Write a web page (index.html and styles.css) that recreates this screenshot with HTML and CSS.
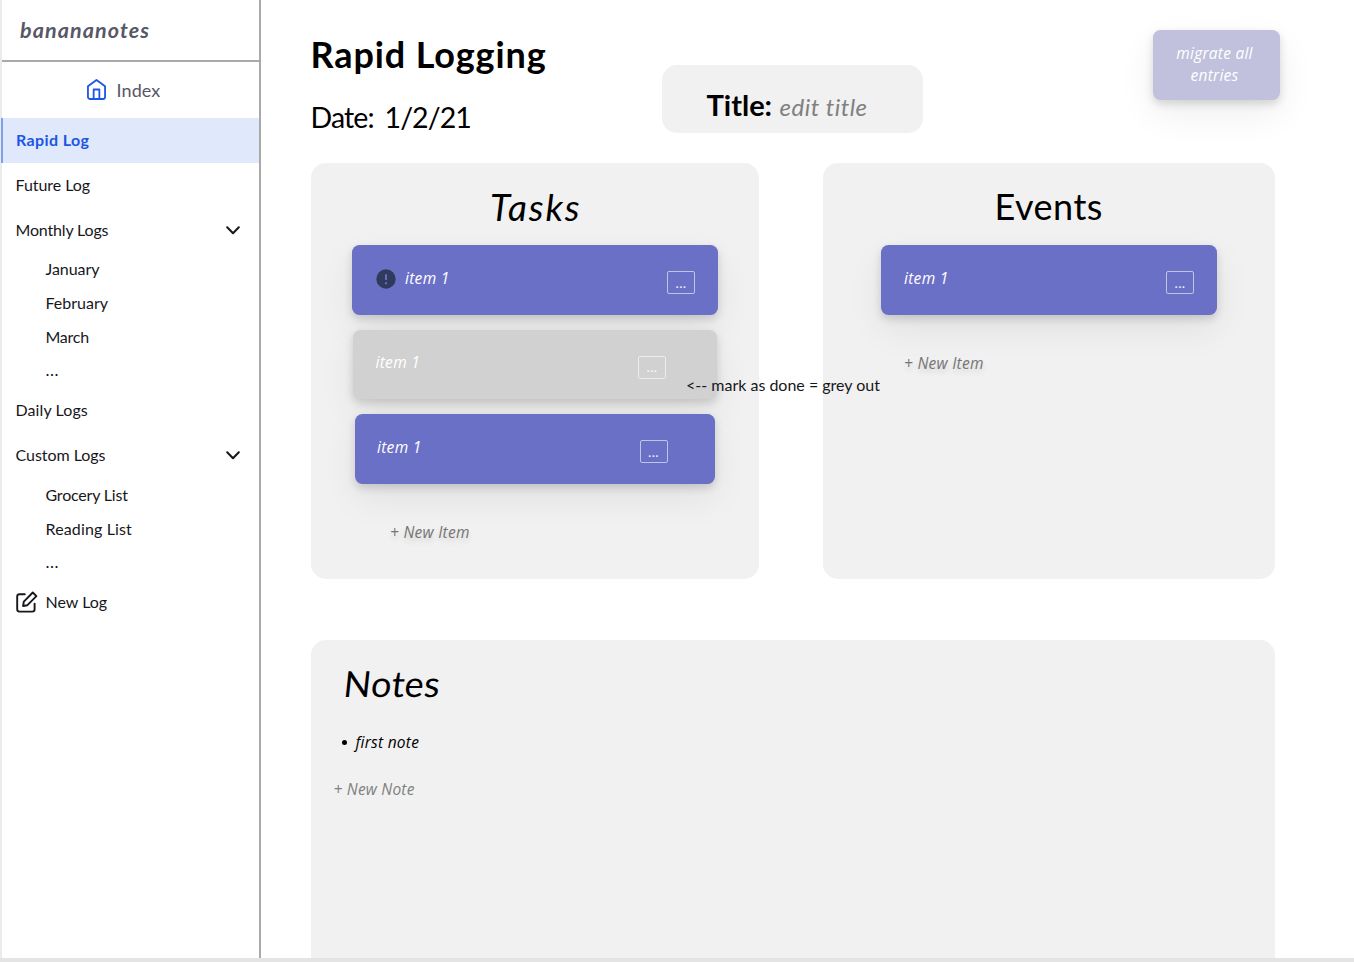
FILE: index.html
```
<!DOCTYPE html>
<html lang="en">
<head>
<meta charset="utf-8">
<title>banananotes</title>
<link rel="stylesheet" href="styles.css">
</head>
<body>
<div class="app">
  <aside class="sidebar">
    <div class="brand"><span>banananotes</span></div>
    <a class="index-link">
      <svg class="home" viewBox="0 0 20 22" fill="none" stroke="#1d55e5" stroke-width="1.9" stroke-linejoin="round"><path d="M1 7.6 10 1l9 6.6V19a2 2 0 0 1-2 2H3a2 2 0 0 1-2-2Z"/><path d="M7 21V11h6v10"/></svg>
      <span>Index</span>
    </a>
    <nav class="nav">
      <a class="row active"><span class="t-rapid">Rapid Log</span></a>
      <a class="row"><span class="t-future">Future Log</span></a>
      <a class="row"><span class="t-monthly">Monthly Logs</span>
        <svg class="chevron" viewBox="0 0 14 9"><path d="m1.2 1.2 5.8 6 5.8-6"/></svg></a>
      <a class="sub t-january">January</a>
      <a class="sub">February</a>
      <a class="sub t-march">March</a>
      <a class="sub dots">...</a>
      <a class="row"><span class="t-daily">Daily Logs</span></a>
      <a class="row"><span class="t-custom">Custom Logs</span>
        <svg class="chevron" viewBox="0 0 14 9"><path d="m1.2 1.2 5.8 6 5.8-6"/></svg></a>
      <div class="group">
        <a class="sub t-grocery">Grocery List</a>
        <a class="sub t-reading">Reading List</a>
        <a class="sub dots">...</a>
      </div>
      <a class="row new-log">
        <svg class="edit" viewBox="0 0 22 22" fill="none" stroke="#17171c" stroke-width="1.9" stroke-linecap="round" stroke-linejoin="round"><path d="M8.8 3.2H3.5a2.3 2.3 0 0 0-2.3 2.3v12.8a2.3 2.3 0 0 0 2.3 2.3h12.8a2.3 2.3 0 0 0 2.3-2.3V12.6"/><path d="m16.8 1.5 3.6 3.6-9 9.1-4.3.8.7-4.4z"/></svg>
        <span>New Log</span></a>
    </nav>
  </aside>

  <main class="main">
    <header class="head">
      <div class="heading">
        <h1>Rapid Logging</h1>
        <p class="date">Date: 1/2/21</p>
      </div>
      <div class="title-box"><b>Title:</b><i>edit title</i></div>
      <button class="migrate">migrate all<br>entries</button>
    </header>

    <div class="panels">
      <section class="panel tasks">
        <h2 class="slant t-tasks">Tasks</h2>
        <div class="card card-a">
          <svg class="alert" viewBox="0 0 20 20"><circle cx="10" cy="10" r="9.7" fill="#303a5c"/><path d="M10 5.3v5.6M10 13.3v1.9" stroke="#6b70c7" stroke-width="1.9"/></svg>
          <span class="item">item 1</span><button class="menu">...</button>
        </div>
        <div class="card card-b done"><span class="item">item 1</span><button class="menu">...</button></div>
        <div class="card card-c"><span class="item">item 1</span><button class="menu">...</button></div>
        <a class="add">+ New Item</a>
        <span class="remark">&lt;-- mark as done = grey out</span>
      </section>
      <section class="panel events">
        <h2>Events</h2>
        <div class="card card-e"><span class="item">item 1</span><button class="menu">...</button></div>
        <a class="add">+ New Item</a>
      </section>
    </div>

    <section class="panel notes">
      <h2 class="t-notes"><span>Notes</span></h2>
      <ul><li>first note</li></ul>
      <a class="add-note">+ New Note</a>
    </section>
  </main>
</div>
</body>
</html>
```

FILE: styles.css
```
* { box-sizing: border-box; margin: 0; padding: 0; }
body {
  width: 1354px; height: 962px; overflow: hidden;
  background: #fff; color: #17171c;
  font: 16px/20px Lato, "Liberation Sans", sans-serif;
}
button { font: inherit; border: 0; }
svg { display: block; flex: none; }
.app { display: flex; height: 962px; border-bottom: 4px solid #e4e4e4; }

.sidebar { width: 261px; flex: none; border-left: 2px solid #ebebeb; border-right: 2px solid #a9a9a9; }
.brand {
  height: 62px; padding: 20px 0 0 18px; border-bottom: 2px solid #a9a9a9;
  font-size: 21.5px; font-weight: 700; font-style: italic; letter-spacing: 1.1px; color: #575767;
}
.index-link { display: flex; align-items: center; height: 55.5px; padding-left: 85px; font-size: 18px; letter-spacing: .1px; color: #575767; }
.home { width: 19px; height: 21px; margin-right: 10.5px; }
.row { display: flex; align-items: center; height: 45px; padding: 0 19px 0 13.5px; }
.row.active { background: #e0e9fc; color: #1d55e5; font-weight: 700; margin-left: -1px; padding-left: 13px; border-left: 2px solid #7d9ff0; }
.chevron { width: 14px; height: 9px; margin-left: auto; fill: none; stroke: #17171c; stroke-width: 2; stroke-linecap: round; stroke-linejoin: round; }
.sub { display: flex; align-items: center; height: 33.75px; padding-left: 43.5px; }
.group { padding-top: 1px; }
.dots { letter-spacing: .5px; font-size: 17px; padding-bottom: 1px; }
.edit { width: 22px; height: 22px; margin-right: 8px; }
.t-rapid { letter-spacing: .4px; }
.t-future { letter-spacing: -.05px; }
.t-monthly { letter-spacing: -.16px; }
.t-january { letter-spacing: -.05px; }
.t-march { letter-spacing: -.25px; }
.t-daily { letter-spacing: .1px; }
.t-custom { letter-spacing: -.04px; }
.t-grocery { letter-spacing: -.2px; }
.t-reading { letter-spacing: .14px; }
.new-log { margin-top: -.5px; }

.main { flex: 1; padding-left: 49.5px; min-width: 0; overflow: hidden; }
.head { display: flex; align-items: flex-start; height: 162.5px; }
.heading { width: 351.5px; color: #000; }
h1 { margin-top: 32px; font-size: 36px; line-height: 44px; font-weight: 700; letter-spacing: .88px; white-space: nowrap; }
.date { margin-top: 22px; font-size: 28.5px; line-height: 38px; letter-spacing: -.9px; word-spacing: 4.5px; }
.title-box {
  display: flex; align-items: baseline; width: 261px; height: 68px; margin-top: 65px; padding: 20px 0 0 44.5px;
  border-radius: 15px; background: #f1f1f1; line-height: 40px;
}
.title-box b { width: 73px; color: #000; font-size: 29px; letter-spacing: 0; }
.title-box i { color: #808080; font-size: 24px; letter-spacing: .5px; }
.migrate {
  width: 127px; height: 69.5px; margin: 30px 0 0 230px; padding: 0 4px 1px 0; border-radius: 7.5px;
  background: #c1c1dd; color: #fff; font: italic 15.5px/22.5px "Open Sans", sans-serif; letter-spacing: .25px;
  box-shadow: 0 4px 8px rgba(0,0,0,.14), 0 14px 36px rgba(0,0,0,.07);
}

.panels { display: flex; gap: 64.5px; }
.panel { background: #f1f1f1; border-radius: 15px; }
.tasks { position: relative; width: 448px; height: 416.5px; padding: 21px 41px 0 41.5px; }
.events { width: 451.5px; height: 416.5px; padding: 21px 58px 0; }
h2 { height: 61.5px; font-size: 36px; line-height: 45px; font-weight: 400; text-align: center; color: #000; letter-spacing: .5px; }
.slant { font-style: italic; }
.t-tasks { letter-spacing: 1.9px; font-size: 37px; padding-left: 2px; }
.t-notes { text-align: left; letter-spacing: .4px; }
.t-notes span { display: inline-block; transform: skewX(-6deg); }
.card {
  display: flex; align-items: flex-start; height: 69.5px; margin-bottom: 15px; padding: 0 22.5px 0 23px;
  border-radius: 7.5px; background: #6b70c7; color: #fff;
  box-shadow: 0 4px 8px rgba(0,0,0,.15), 0 14px 36px rgba(0,0,0,.07);
}
.item { margin-top: 22.5px; font: italic 15.5px/20px "Open Sans", sans-serif; letter-spacing: .3px; }
.alert { width: 20px; height: 20px; margin: 24px 9px 0 1px; }
.menu {
  width: 28px; height: 23px; margin: 26px 0 0 auto; border: 1px solid rgba(255,255,255,.65); border-radius: 2px;
  background: none; color: #fff; opacity: .9; font: 14px/20px Lato, sans-serif; letter-spacing: .4px;
}
.card-b { margin-left: 1px; margin-right: .5px; padding-right: 51px; padding-left: 22.5px; }
.card-c { margin-left: 3px; margin-right: 3px; padding-right: 47px; padding-left: 22px; }
.done { background: #d1d1d1; }
.add {
  display: block; margin: 38px 0 0 38px; font: italic 15.5px/20px "Open Sans", sans-serif; letter-spacing: .25px; color: #757575;
  text-shadow: 0 4px 6px rgba(0,0,0,.14);
}
.events .add { margin: 38px 0 0 23px; }
.remark { position: absolute; left: 375.5px; top: 212px; white-space: nowrap; }

.notes { width: 964px; height: 340px; margin-top: 61px; padding: 21px 0 0 23px; }
.notes h2 { padding-left: 10px; }
.notes ul { list-style: none; padding-left: 8px; color: #000; font: italic 15.5px/20px "Open Sans", sans-serif; letter-spacing: .25px; }
.notes li { display: flex; align-items: center; margin-top: 9.5px; }
.notes li::before { content: ""; width: 5px; height: 5px; margin: 0 9px 0 0; border-radius: 50%; background: #000; }
.add-note { display: block; margin-top: 27px; font: italic 15.5px/20px "Open Sans", sans-serif; letter-spacing: .2px; color: #808080; }
```
